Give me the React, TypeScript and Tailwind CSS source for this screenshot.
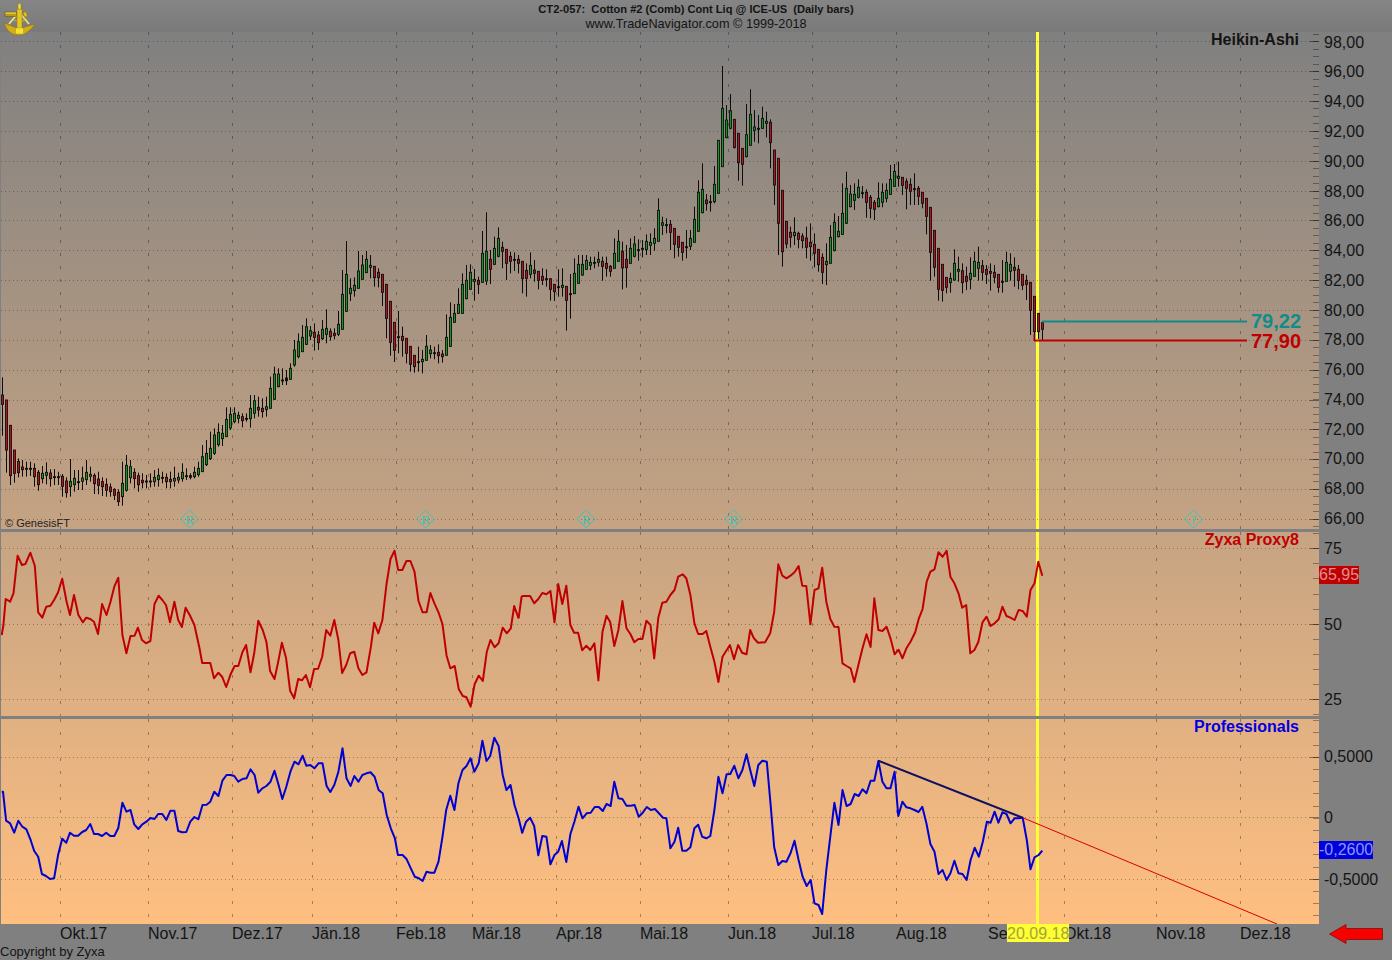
type Raw = [number, number, number, number, string];

// candles read off the chart as [bodyTop, bodyBottom, wickTop, wickBottom, colour], per crop
const part1: Raw[] = [
  [75,103,22,197,'r'],[90,240,90,308,'r'],[166,317,166,345,'r'],[240,310,240,338,'r'],[274,308,265,322,'r'],
  [291,299,270,320,'r'],[295,295,275,320,'k'],[295,295,275,318,'k'],[295,320,280,350,'r'],[307,344,300,362,'r'],
  [310,326,288,340,'g'],[307,316,277,343,'g'],[309,326,298,350,'r'],[320,320,297,345,'k'],[320,320,305,345,'k'],
  [319,349,312,380,'r'],[333,368,322,383,'r'],[334,350,267,380,'g'],[325,344,300,365,'g'],[335,335,300,360,'k'],
  [324,334,290,360,'g'],[307,329,270,345,'g'],[313,319,290,335,'g'],[316,341,310,372,'r'],[327,346,305,373,'r'],
  [335,350,322,378,'r'],[343,361,325,380,'r'],[351,365,340,380,'r'],[358,376,355,390,'r'],[367,395,358,408,'r'],
  [340,380,275,407,'g'],[286,361,255,365,'g'],[290,323,270,340,'g'],[307,326,295,355,'r'],[317,344,308,365,'r'],
  [331,338,310,355,'r'],[333,333,315,355,'k'],[333,333,310,352,'k'],[322,335,300,350,'g'],[316,329,295,350,'g'],
  [322,322,305,340,'k'],[322,335,310,355,'r'],[328,335,305,355,'r'],[325,333,290,350,'g'],[322,330,308,340,'g'],
  [307,326,280,335,'g'],[317,317,295,330,'k'],[317,322,310,328,'k'],[307,320,290,325,'g'],[295,314,275,320,'g'],
  [260,305,225,305,'g'],[250,284,210,288,'g'],[235,266,185,270,'g'],[195,250,175,255,'g'],[187,224,160,230,'g'],
  [190,206,165,228,'g'],[148,200,112,200,'g'],[133,174,112,180,'g'],[130,155,112,160,'g'],[136,145,125,160,'g'],
  [140,152,130,172,'r'],[145,145,130,155,'k'],[115,146,75,173,'g'],[92,130,75,145,'g'],[112,120,80,140,'r'],
  [115,125,85,143,'r'],[110,119,80,140,'g'],[55,115,20,115,'g'],[12,88,-10,90,'g'],[12,50,-5,52,'g'],
  [30,30,-5,45,'k'],[24,32,0,45,'k'],[-5,28,-20,30,'g'],[-60,-15,-90,-10,'g'],[-85,-40,-110,-35,'g'],
];

const part2: Raw[] = [
  [412,455,375,455,'g'],[380,433,355,435,'g'],[392,408,378,420,'g'],[397,412,370,452,'r'],[405,428,393,450,'r'],
  [388,416,360,420,'g'],[385,403,328,430,'g'],[394,410,385,422,'r'],[400,407,385,418,'r'],[373,403,333,408,'g'],
  [283,388,210,390,'g'],[223,334,123,336,'g'],[265,281,235,303,'g'],[256,272,232,290,'g'],[213,265,153,265,'g'],
  [195,238,165,238,'g'],[178,218,153,218,'g'],[196,202,165,235,'g'],[199,233,199,260,'r'],[217,233,205,262,'r'],
  [223,277,223,318,'r'],[253,355,253,415,'r'],[304,427,304,467,'r'],[367,451,367,486,'r'],[410,410,333,460,'k'],
  [409,421,380,470,'r'],[415,460,415,490,'r'],[439,493,439,515,'r'],[466,500,466,518,'r'],[485,485,440,515,'k'],
  [478,485,450,520,'g'],[439,481,405,481,'g'],[450,461,435,475,'g'],[458,458,440,478,'k'],[457,467,433,490,'r'],
  [462,470,450,488,'r'],[412,466,343,466,'g'],[352,439,307,441,'g'],[340,367,312,368,'g'],[313,340,265,342,'g'],
  [253,340,220,342,'g'],[241,296,195,298,'g'],[217,268,193,270,'g'],[238,244,207,302,'g'],[241,253,230,282,'r'],
  [160,247,93,248,'g'],[154,243,37,255,'g'],[178,208,150,252,'r'],[145,193,110,195,'g'],[115,169,82,172,'g'],
  [142,154,125,205,'r'],[148,190,148,240,'r'],[169,184,155,220,'r'],[178,178,157,213,'k'],[178,190,165,220,'r'],
  [184,236,184,280,'r'],[211,235,190,290,'r'],[196,223,157,235,'g'],[210,220,180,245,'r'],[214,241,214,268,'r'],
  [229,241,205,255,'r'],[236,236,208,260,'k'],[236,268,236,302,'r'],[253,275,253,303,'r'],[260,260,208,290,'k'],
  [256,262,205,290,'g'],[259,301,259,392,'r'],[281,281,222,356,'k'],[220,281,175,281,'g'],[193,250,165,250,'g'],
  [193,225,165,228,'g'],[181,208,165,210,'g'],[187,196,170,210,'g'],[187,187,170,205,'k'],[178,187,155,200,'g'],
  [184,199,170,242,'r'],[190,205,170,230,'r'],[199,214,195,230,'r'],[160,205,115,205,'g'],[124,184,90,184,'g'],
  [154,204,125,268,'r'],[178,203,135,263,'r'],[145,190,115,192,'g'],[132,169,108,172,'g'],[149,149,118,182,'k'],
  [145,145,120,172,'k'],[124,149,103,165,'g'],[127,136,100,165,'g'],[115,130,85,152,'g'],[31,124,-5,125,'g'],
  [68,76,50,105,'g'],[74,74,55,100,'k'],[73,97,60,150,'r'],[85,133,85,175,'r'],[109,142,109,170,'r'],
  [127,157,127,182,'r'],[140,140,90,175,'k'],[115,139,90,150,'g'],[58,127,20,127,'g'],
];

const part3: Raw[] = [
  [577,694,541,695,'g'],[568,638,490,640,'g'],[600,611,582,632,'r'],[605,605,585,635,'k'],[553,605,498,610,'g'],
  [421,580,420,582,'g'],[325,500,198,500,'g'],[360,413,315,415,'g'],[332,385,282,388,'g'],[358,443,358,445,'r'],
  [400,488,400,542,'r'],[445,493,445,557,'r'],[404,470,312,472,'g'],[343,436,268,438,'g'],[381,391,330,425,'g'],
  [385,385,345,430,'k'],[355,385,320,387,'g'],[364,370,335,412,'g'],[367,428,358,505,'r'],
];

const part4: Raw[] = [
  [0,105,0,165,'r'],[25,220,25,315,'r'],[121,305,121,350,'r'],[214,282,214,295,'r'],[247,262,230,293,'r'],
  [247,257,202,285,'g'],[250,268,245,295,'r'],[258,272,250,295,'r'],[264,292,230,325,'r'],[277,290,220,332,'r'],
  [283,310,250,352,'r'],[298,344,298,365,'r'],[322,367,310,402,'r'],[334,344,280,405,'g'],[262,340,225,340,'g'],
  [217,302,190,304,'g'],[244,260,198,262,'g'],[190,253,100,255,'g'],[115,220,65,222,'g'],[132,170,105,172,'g'],
  [133,151,100,180,'g'],[112,142,88,145,'g'],[128,128,108,145,'k'],[127,157,118,203,'r'],[142,175,135,205,'r'],
  [157,178,150,210,'r'],[145,170,97,172,'g'],[127,157,100,172,'g'],[121,145,100,157,'g'],[88,133,45,135,'g'],
  [64,109,42,110,'g'],[79,85,35,110,'g'],[82,106,82,135,'r'],[94,115,85,178,'r'],[103,124,85,165,'r'],
  [116,116,70,165,'k'],[115,139,108,165,'r'],[127,160,127,175,'r'],[145,199,145,253,'r'],[172,307,172,392,'r'],
  [241,352,241,380,'r'],[295,418,295,452,'r'],[343,421,343,455,'r'],[382,412,382,430,'r'],[385,398,368,428,'g'],
  [340,390,298,392,'g'],[358,364,320,395,'g'],[362,398,340,430,'r'],[379,394,350,420,'r'],[370,388,322,418,'g'],
  [334,379,305,380,'g'],[337,355,290,392,'g'],[347,367,330,392,'r'],[358,373,345,402,'r'],[364,370,340,422,'r'],
  [367,382,345,400,'r'],[373,412,373,428,'r'],[394,394,330,428,'k'],[337,394,305,395,'g'],[343,364,310,392,'g'],
  [352,361,322,410,'r'],[358,391,345,418,'r'],[373,406,373,420,'r'],[391,403,375,450,'r'],[397,481,397,555,'r'],
  [439,545,439,572,'r'],[490,545,490,567,'r'],[518,538,513,570,'r'],
];

const toReal = (list: Raw[], top: number): Raw[] =>
  list.map(([a, b, c, d, k]) => [top + a / 3, top + b / 3, top + c / 3, top + d / 3, k]);

const candles: Raw[] = [...toReal(part1, 370), ...toReal(part2, 200), ...toReal(part3, 0), ...toReal(part4, 150)];

const proxyA = '5,300 10,270 17,192 30,200 40,175 52,62 65,90 75,87 90,53 103,92 113,232 125,248 137,215 149,212 160,195 172,172 184,131 197,200 207,240 219,180 232,240 245,262 255,248 267,252 278,260 290,297 302,207 315,240 327,200 338,155 350,128 362,300 374,355 386,303 398,302 408,278 420,315 432,325 445,318 457,207 469,182 480,195 491,210 503,262 516,200 527,255 538,276 549,218 561,240 575,270 590,340 598,384 622,384 633,430 646,413 657,425 669,456 682,418 694,393 705,393 717,352 728,330 741,412 752,355 764,257 777,285 788,320 799,408 812,432 822,385 834,323 846,368 858,467 870,490 882,432 893,436 905,420 917,457 929,402 941,401 953,365 965,285 977,302 989,255 1001,315 1012,414 1024,390 1036,355 1048,350 1060,400 1072,420 1084,412 1097,335 1107,263 1119,295 1131,255 1143,150 1155,72 1167,47 1178,105 1190,105 1202,78 1214,78 1226,110 1238,198 1250,232 1262,232 1273,174 1285,205 1297,232 1309,268 1321,362 1332,400 1345,393 1357,463 1369,483 1380,487 1392,515 1404,448 1416,422 1428,438 1440,350 1451,315 1463,337 1475,325 1487,278 1499,295 1511,280 1521,213 1534,250';
const proxyB = '5,183 30,183 42,205 54,192 66,174 78,178 90,168 102,262 113,147 125,207 137,152 149,270 160,293 172,293 184,346 196,332 208,345 220,325 232,436 244,290 256,242 267,262 279,333 291,285 303,198 315,280 327,298 338,322 350,312 362,312 374,257 386,270 397,370 409,248 421,203 433,200 445,180 457,165 468,125 481,118 492,130 504,180 516,265 527,297 540,297 551,288 563,335 575,380 587,441 599,365 621,330 633,373 645,330 657,353 670,358 681,285 692,310 704,323 725,322 740,295 752,230 764,88 776,122 788,130 800,122 812,112 824,93 835,152 847,153 859,268 871,165 883,160 894,98 906,200 918,252 930,275 942,276 954,385 966,393 978,400 989,441 1001,390 1013,340 1025,298 1037,336 1048,190 1060,285 1072,288 1084,275 1096,310 1108,358 1120,344 1131,370 1143,340 1155,320 1169,292 1180,250 1191,222 1203,140 1214,110 1226,103 1238,52 1250,65 1262,47 1273,125 1285,145 1297,175 1308,218 1320,210 1332,355 1344,345 1356,320 1368,262 1380,245 1392,273 1404,265 1416,253 1427,215 1439,243 1451,248 1463,255 1475,225 1487,228 1499,245 1510,165 1522,145 1533,80 1545,122';
const proA = '5,185 9,185 18,272 30,280 42,308 54,272 66,290 78,298 90,328 101,362 113,380 124,432 136,438 148,447 160,445 172,375 184,326 196,338 207,308 219,317 231,317 243,306 255,300 267,282 278,312 290,312 302,318 314,308 326,318 338,318 350,294 362,218 374,245 386,240 397,283 409,297 421,283 433,275 445,264 457,267 468,252 480,252 492,270 504,242 516,242 527,303 539,307 551,306 563,275 575,261 587,268 599,225 611,224 622,215 634,185 646,198 658,152 670,135 682,135 693,138 705,155 717,147 729,145 741,118 753,135 764,188 776,175 788,168 800,155 812,122 824,165 835,207 847,170 859,125 871,95 883,103 895,77 906,107 918,105 930,115 942,100 954,100 966,168 977,186 989,165 1001,125 1013,55 1025,145 1037,168 1048,138 1060,155 1072,135 1084,130 1096,127 1108,140 1120,180 1132,190 1144,255 1156,295 1168,325 1177,375 1191,375 1203,388 1215,415 1227,440 1239,445 1250,453 1262,425 1273,428 1285,428 1297,395 1309,320 1320,240 1332,197 1344,240 1356,160 1368,120 1380,108 1392,85 1403,125 1416,100 1427,32 1439,93 1450,78 1462,23 1475,48 1487,135 1498,180 1510,165 1522,225 1534,265 1545,310';
const proB = '6,310 18,275 30,263 42,288 54,376 66,318 78,320 90,403 102,375 113,365 124,333 137,396 149,312 161,275 173,230 185,265 197,250 209,248 221,231 233,231 245,243 256,222 268,228 279,155 291,205 303,207 315,227 327,227 339,225 351,260 363,248 375,231 387,240 399,237 411,250 423,263 433,265 445,355 457,335 468,293 480,362 492,362 504,352 516,295 527,284 539,320 551,325 563,318 575,240 587,140 599,190 611,133 622,132 634,107 646,145 658,120 670,73 681,120 693,168 705,105 717,92 730,95 741,220 752,352 764,405 776,393 788,395 800,370 812,332 824,390 836,440 848,468 860,450 871,520 883,525 894,552 906,420 918,320 930,218 942,285 954,180 966,228 978,222 990,192 1002,198 1013,178 1025,190 1037,152 1048,152 1060,93 1072,155 1084,175 1096,175 1108,125 1119,258 1131,215 1143,232 1155,235 1167,240 1179,246 1190,230 1202,280 1214,342 1226,365 1238,432 1250,420 1262,450 1273,430 1285,392 1297,430 1309,432 1321,450 1333,390 1345,353 1357,380 1369,335 1381,275 1392,278 1404,245 1415,278 1427,247 1439,252 1451,280 1463,265 1475,265 1487,263 1499,330 1510,418 1522,382 1534,375 1545,362';

// crops were scaled about 2.958x horizontally, 3x vertically
const toPoints = (raw: string, left: number, top: number) =>
  raw
    .split(' ')
    .map((p) => {
      const [x, y] = p.split(',').map(Number);
      return `${(left + x / 2.958).toFixed(1)},${(top + y / 3).toFixed(1)}`;
    })
    .join(' ');

const monthX = [60.5, 148.5, 232.5, 312.5, 396.5, 472.5, 556.5, 640.5, 728.5, 812.5, 896.5, 988.5, 1064.5, 1156.5, 1240.5];

const priceRows = ['98,00', '96,00', '94,00', '92,00', '90,00', '88,00', '86,00', '84,00', '82,00', '80,00', '78,00', '76,00', '74,00', '72,00', '70,00', '68,00', '66,00'];

const priceY = priceRows.map((_, i) => 41.3 + i * 29.85);

function Grid({ top, height, major, step, count }: { top: number; height: number; major: number[]; step: number; count: number }) {
  const minor = Array.from({ length: count }, (_, i) => top + ((major[0] - top) % step) + i * step);
  return (
    <g>
      {monthX.map((x) => (
        <line key={x} x1={x} x2={x} y1={top} y2={top + height} stroke="#000" strokeOpacity="0.33" strokeDasharray="3 10" />
      ))}
      {major.map((y) => (
        <line key={y} x1={1} x2={1309} y1={Math.round(y) + 0.5} y2={Math.round(y) + 0.5} stroke="#000" strokeOpacity="0.3" strokeDasharray="1 3" />
      ))}
      {minor.map((y) => (
        <line key={y} x1={1313} x2={1319} y1={Math.round(y) + 0.5} y2={Math.round(y) + 0.5} stroke="#000" strokeOpacity="0.35" />
      ))}
      {major.map((y) => (
        <line key={`m${y}`} x1={1309} x2={1319} y1={Math.round(y) + 0.5} y2={Math.round(y) + 0.5} stroke="#000" strokeOpacity="0.42" />
      ))}
    </g>
  );
}

function Candles() {
  return (
    <g>
      {candles.map(([a, b, hi, lo, kind], i) => {
        const x = 2.5 + i * 4;
        const fill = kind === 'g' ? '#0f9a1e' : kind === 'r' ? '#b8101f' : '#111';
        return (
          <g key={i}>
            <line x1={x} x2={x} y1={hi} y2={lo} stroke="#0c0c0c" strokeWidth="1" />
            <rect x={x - 1} y={a} width="2" height={Math.max(b - a, 1)} fill={fill} stroke="#101010" strokeWidth="0.9" />
          </g>
        );
      })}
    </g>
  );
}

function Marker({ x, label }: { x: number; label: string }) {
  return (
    <g>
      <polygon points={`${x},510 ${x + 9},519 ${x},528 ${x - 9},519`} fill="none" stroke="#35c4b6" strokeWidth="0.9" />
      <text x={x} y={523.5} textAnchor="middle" fontSize="13" fill="#35c4b6" fontFamily="'Liberation Serif', serif">
        {label}
      </text>
    </g>
  );
}

function Sextant() {
  return (
    <svg viewBox="0 0 36 36" className="absolute left-0 top-0 w-[36px] h-[36px]">
      <path d="M4 23 L19 29 L35 24 L31 29 Q25 35 19 35 Q11 35 7 29 Z" fill="#d4ae12" stroke="#8a7010" strokeWidth="0.5" />
      <path d="M19 12 L9 24 M19 12 L29 24" stroke="#f2e27a" strokeWidth="1.8" />
      <path d="M14 20 Q19 23 25 20" fill="none" stroke="#c8a414" strokeWidth="1.4" />
      <rect x="17" y="9" width="5" height="20" fill="#e6c624" stroke="#927812" strokeWidth="0.5" />
      <rect x="5" y="12" width="11.5" height="4.5" fill="#b89c18" stroke="#5f5010" strokeWidth="0.5" />
      <rect x="5.5" y="12.5" width="10.5" height="1.3" fill="#e9d23c" />
      <rect x="18" y="3.5" width="3" height="6" rx="1.4" fill="#f2da3a" stroke="#927812" strokeWidth="0.5" />
      <rect x="23.5" y="12" width="3.2" height="5" fill="#dcc020" stroke="#8a7010" strokeWidth="0.5" transform="rotate(-20 25 14)" />
      <rect x="15.5" y="28" width="8" height="6" fill="#f6e02e" stroke="#a88c12" strokeWidth="0.4" />
    </svg>
  );
}

const dateCells = [
  ['Okt.17', 'w-[88px]'],
  ['Nov.17', 'w-[84px]'],
  ['Dez.17', 'w-[80px]'],
  ['Jän.18', 'w-[84px]'],
  ['Feb.18', 'w-[76px]'],
  ['Mär.18', 'w-[84px]'],
  ['Apr.18', 'w-[84px]'],
  ['Mai.18', 'w-[88px]'],
  ['Jun.18', 'w-[84px]'],
  ['Jul.18', 'w-[84px]'],
  ['Aug.18', 'w-[92px]'],
  ['Se', 'w-[76px]'],
  ['Okt.18', 'w-[92px]'],
  ['Nov.18', 'w-[84px]'],
  ['Dez.18', 'w-[88px]'],
];

export default function App() {
  return (
    <div className="relative w-[1392px] h-[960px] overflow-hidden bg-[#808080] text-[#141414] font-['Liberation_Sans',Arial,sans-serif]">
      {/* header */}
      <div className="relative h-[32px] bg-gradient-to-b from-[#858585] to-[#7a7a7a] flex flex-col items-center">
        <div className="text-[11.1px] font-bold leading-[13px] mt-[3px] whitespace-pre">CT2-057:  Cotton #2 (Comb) Cont Liq @ ICE-US  (Daily bars)</div>
        <div className="text-[12.7px] leading-[15px] mt-[1px] whitespace-pre">www.TradeNavigator.com © 1999-2018</div>
      </div>

      <div className="flex h-[892px]">
        {/* chart panes */}
        <div className="relative w-[1319px] flex flex-col border-l border-[#808080] bg-gradient-to-b from-[#808080] to-[#ffbf80]">
          <div className="absolute left-[1035px] top-0 bottom-0 w-[3px] bg-[#ffff33]" />

          <div className="relative h-[497px]">
            <svg viewBox="1 32 1318 497" className="absolute inset-0 w-[1318px] h-[497px]">
              <Grid top={32} height={497} major={priceY} step={7.46} count={67} />
              <Candles />
              <line x1={1034} x2={1034} y1={334} y2={341} stroke="#c00000" strokeWidth="1" />
              <line x1={1042} x2={1247} y1={321.5} y2={321.5} stroke="#108c8c" strokeWidth="2" />
              <line x1={1034} x2={1247} y1={340.5} y2={340.5} stroke="#c00000" strokeWidth="2" />
              <Marker x={189.5} label="R" />
              <Marker x={425.5} label="R" />
              <Marker x={586} label="R" />
              <Marker x={733.5} label="R" />
              <Marker x={1193.5} label="?" />
            </svg>
            <div className="absolute right-[20px] top-[-1px] text-base leading-[18px] font-bold">Heikin-Ashi</div>
            <div className="absolute left-[1250px] top-[279px] text-[20px] leading-[20px] font-bold text-[#108c8c]">79,22</div>
            <div className="absolute left-[1250px] top-[299px] text-[20px] leading-[20px] font-bold text-[#c00000]">77,90</div>
            <div className="absolute left-[4px] bottom-[-1px] text-[11px] leading-[13px] text-[#222]">© GenesisFT</div>
          </div>

          <div className="relative h-[3px] bg-[#808080]" />

          <div className="relative h-[184px]">
            <svg viewBox="1 532 1318 184" className="absolute inset-0 w-[1318px] h-[184px]">
              <Grid top={532} height={184} major={[548.3, 624, 699.4]} step={15.1} count={13} />
              <polyline points={toPoints(proxyA, 0, 535)} fill="none" stroke="#c00000" strokeWidth="2" strokeLinejoin="round" />
              <polyline points={toPoints(proxyB, 520, 535)} fill="none" stroke="#c00000" strokeWidth="2" strokeLinejoin="round" />
              <line x1={518.6} x2={521.7} y1={618.3} y2={596} stroke="#c00000" strokeWidth="2" />
            </svg>
            <div className="absolute right-[20px] top-[-1px] text-base leading-[18px] font-bold text-[#c00000]">Zyxa Proxy8</div>
          </div>

          <div className="relative h-[3px] bg-[#808080]" />

          <div className="relative h-[205px]">
            <svg viewBox="1 719 1318 205" className="absolute inset-0 w-[1318px] h-[205px]">
              <Grid top={719} height={205} major={[756.7, 817.3, 879.3]} step={12.2} count={17} />
              <polyline points={toPoints(proA, 0, 730)} fill="none" stroke="#0000d0" strokeWidth="2" strokeLinejoin="round" />
              <polyline points={toPoints(proB, 520, 730)} fill="none" stroke="#0000d0" strokeWidth="2" strokeLinejoin="round" />
              <line x1={1022.7} y1={817.7} x2={1277} y2={924} stroke="#d80000" strokeWidth="1" />
              <line x1={878.3} y1={760.7} x2={1022.7} y2={817.7} stroke="#101060" strokeWidth="2" />
            </svg>
            <div className="absolute right-[20px] top-[-1px] text-base leading-[18px] font-bold text-[#0000e0]">Professionals</div>
          </div>
        </div>

        {/* value axis */}
        <div className="w-[73px] flex flex-col text-base">
          <div className="h-[500px]">
            <div className="-mt-[4.2px] pl-[5px]">
              {priceRows.map((label) => (
                <div key={label} className="h-[29.78px] flex items-center">{label}</div>
              ))}
            </div>
          </div>
          <div className="relative h-[187px]">
            <div className="-mt-[20.8px] pl-[5px]">
              {['75', '50', '25'].map((label) => (
                <div key={label} className="h-[75.6px] flex items-center">{label}</div>
              ))}
            </div>
            <div className="absolute left-0 top-[34px] w-[40px] h-[18px] leading-[18px] bg-[#c00000] text-[#dc9090]">65,95</div>
          </div>
          <div className="relative h-[205px]">
            <div className="mt-[7.4px] pl-[5px]">
              {['0,5000', '0', '-0,5000'].map((label) => (
                <div key={label} className="h-[61.4px] flex items-center">{label}</div>
              ))}
            </div>
            <div className="absolute left-0 top-[122px] w-[54px] h-[18px] leading-[18px] bg-[#0000e0] text-[#8a98ec]">-0,2600</div>
          </div>
        </div>
      </div>

      {/* date axis */}
      <div className="relative flex h-[18px] pl-[60px] text-base leading-[20px]">
        {dateCells.map(([label, width]) => (
          <div key={label} className={width}>{label}</div>
        ))}
        <svg viewBox="0 0 54 20" className="w-[54px] h-[20px] ml-[1px] shrink-0">
          <polygon points="0.5,10 17,0.5 17,4.5 53.5,4.5 53.5,15.5 17,15.5 17,19.5" fill="#f80000" stroke="#7a1010" strokeWidth="0.8" />
        </svg>
        <div className="absolute left-[1007px] top-0 w-[62px] h-[18px] bg-[#ffff33] text-[#a3a33a]">20.09.18</div>
      </div>

      <div className="text-[13px] leading-[20px] h-[18px]">Copyright by Zyxa</div>

      <Sextant />
    </div>
  );
}
